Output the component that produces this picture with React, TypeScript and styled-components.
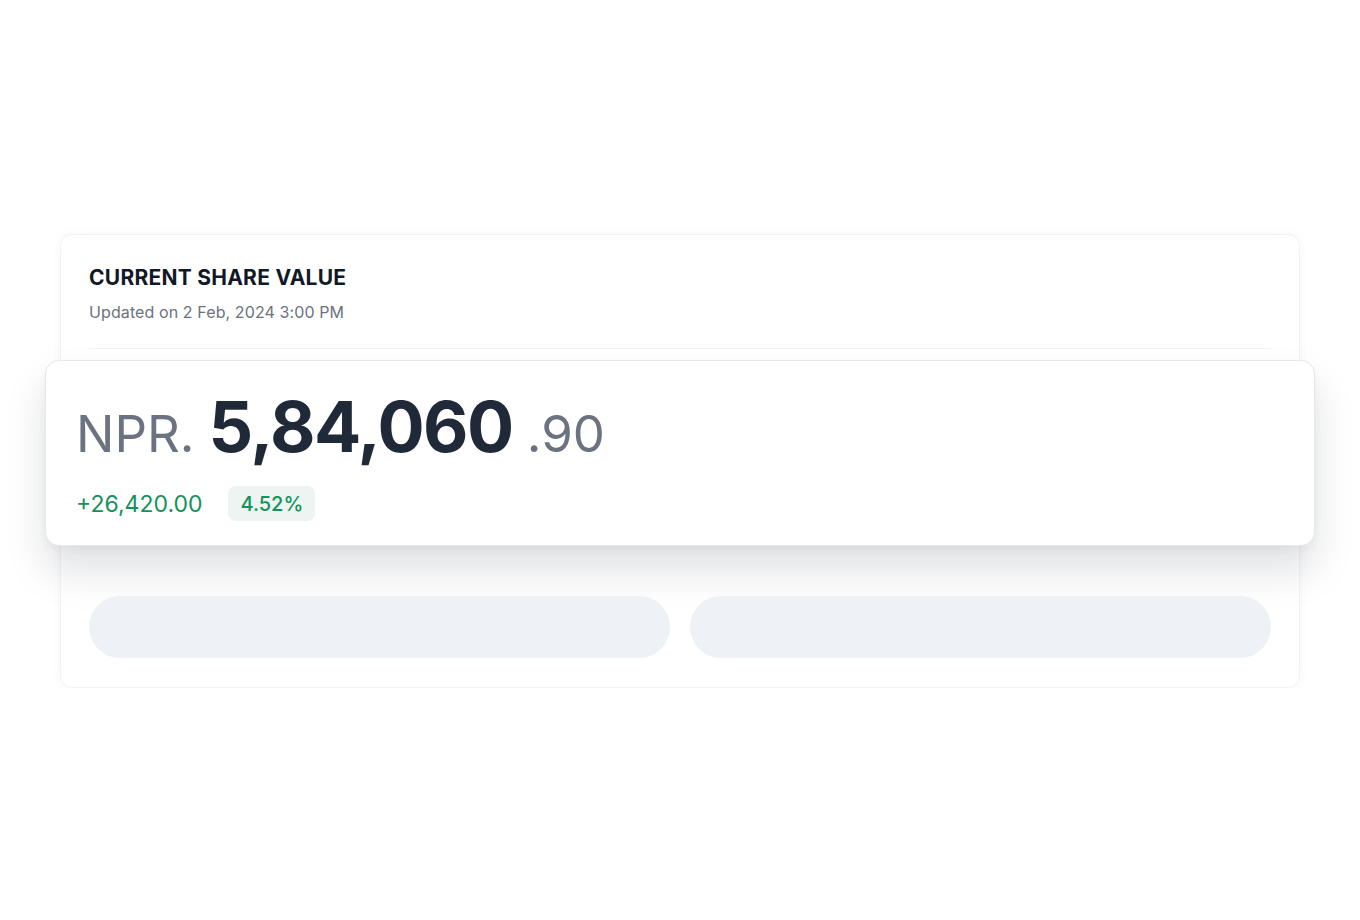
import styled, { createGlobalStyle } from "styled-components"

const Global = createGlobalStyle`
  body {
    margin: 0;
    background: #ffffff;
    font-family: "Inter", "Noto Sans", sans-serif;
  }
`

const Page = styled.div`
  padding: 234px 60px 0;
`

const Card = styled.section`
  background: #fff;
  border: 1px solid #f1f2f4;
  border-radius: 12px;
  box-shadow: 0 0 12px rgba(17, 24, 39, 0.04);
  padding: 29px 28px 29px;
`

const Title = styled.h2`
  margin: 0;
  font-size: 21px;
  line-height: 28px;
  font-weight: 700;
  color: #111827;
  letter-spacing: 0.25px;
`

const Sub = styled.p`
  margin: 8px 0 0;
  font-size: 16px;
  line-height: 24px;
  color: #6b7280;
  letter-spacing: 0.1px;
`

const Divider = styled.hr`
  margin: 24px 0 0;
  border: none;
  border-top: 1px solid #f0f1f3;
`

const Floating = styled.div`
  margin: 11px -44px 0;
  background: #fff;
  border: 1px solid #e6e8ec;
  border-radius: 14px;
  box-shadow: 0 24px 40px rgba(17, 24, 39, 0.13), 0 4px 10px rgba(17, 24, 39, 0.04);
  padding: 30px 30px 24px;
`

const Amount = styled.div`
  display: flex;
  align-items: baseline;
  gap: 14px;
  line-height: 1;
`

const Unit = styled.span<{ $size: number }>`
  font-size: ${(p) => p.$size}px;
  font-weight: 400;
  color: #6b7280;
`

const Big = styled.span`
  font-size: 70px;
  font-weight: 700;
  color: #1f2937;
  letter-spacing: -1.5px;
  line-height: 72px;
`

const Change = styled.div`
  display: flex;
  align-items: center;
  gap: 26px;
  margin-top: 23px;
`

const Delta = styled.span`
  font-size: 23px;
  color: #13925a;
`

const Badge = styled.span`
  display: inline-flex;
  align-items: center;
  height: 35px;
  padding: 0 12px;
  border-radius: 8px;
  background: #eef4f2;
  color: #13925a;
  font-size: 20px;
  font-weight: 500;
`

const Actions = styled.div`
  display: grid;
  grid-template-columns: 1fr 1fr;
  gap: 20px;
  margin-top: 50px;
`

const Pill = styled.div`
  height: 62px;
  border-radius: 31px;
  background: #eef1f5;
`

export default function App() {
  return (
    <Page>
      <Global />
      <Card>
        <Title>CURRENT SHARE VALUE</Title>
        <Sub>Updated on 2 Feb, 2024 3:00 PM</Sub>
        <Divider />
        <Floating>
          <Amount>
            <Unit $size={51}>NPR.</Unit>
            <Big>5,84,060</Big>
            <Unit $size={51}>.90</Unit>
          </Amount>
          <Change>
            <Delta>+26,420.00</Delta>
            <Badge>4.52%</Badge>
          </Change>
        </Floating>
        <Actions>
          <Pill />
          <Pill />
        </Actions>
      </Card>
    </Page>
  )
}
